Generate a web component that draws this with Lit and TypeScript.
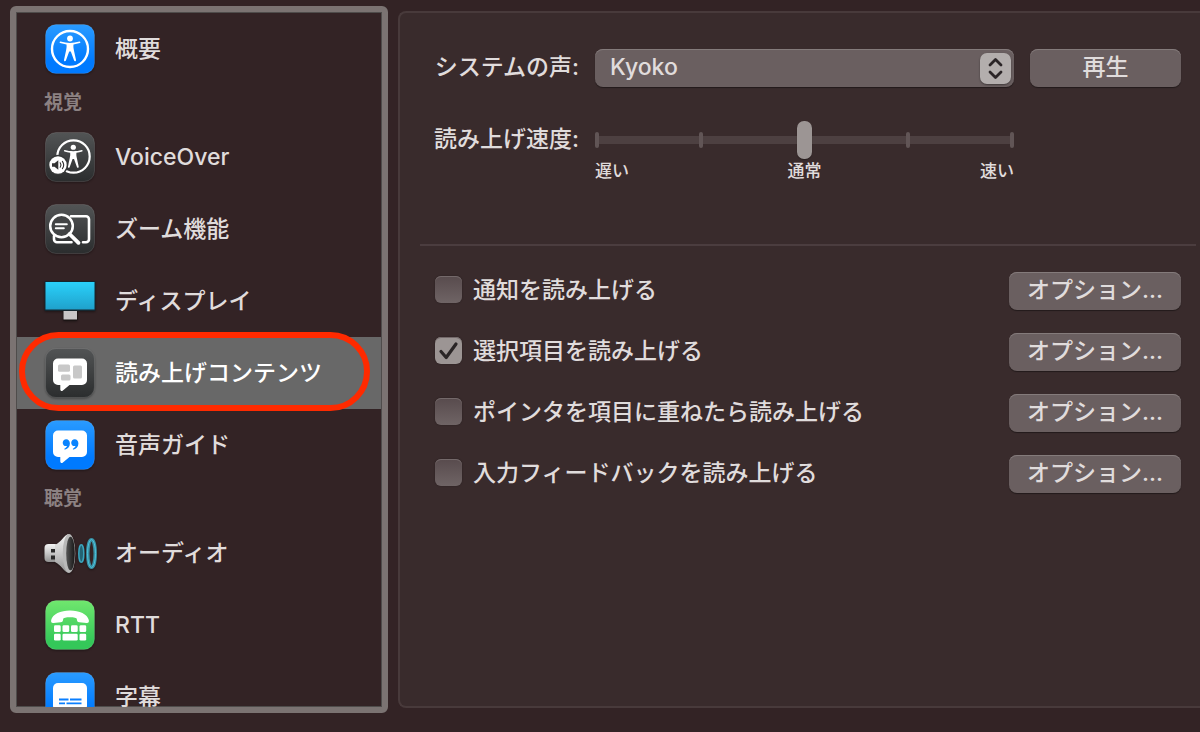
import { LitElement, html, css, svg } from "lit";
import { customElement, property, state } from "lit/decorators.js";
import { classMap } from "lit/directives/class-map.js";

const person = svg`
  <circle cx="25" cy="14.500" r="2.900" fill="#fff"/>
  <path d="M15.600 17.600c3.200.9 6 1.300 9.400 1.300s6.200-.4 9.400-1.300c1-.2 1.400 1.200.5 1.500-2.200.7-4.200 1.100-6.400 1.400-.3 1.800 0 4 .5 6.200l2 9.400c.1 1.400-1.400 1.700-1.900.5l-3.300-9.100h-1.600l-3.300 9.100c-.5 1.200-2 .9-1.900-.5l2-9.400c.5-2.200.8-4.400.5-6.200-2.200-.3-4.200-.7-6.400-1.400-.9-.3-.5-1.700.5-1.500z" fill="#fff"/>`;

const tile = (fill: string) => svg`
  <rect x="0.500" y="0.500" width="49" height="49" rx="10.500" fill="url(#${fill})" stroke="#fff" stroke-opacity="0.120"/>`;

const defs = svg`
  <defs>
    <linearGradient id="blue" x2="0" y2="1"><stop stop-color="#2a9bff"/><stop offset="0.750" stop-color="#007aff"/></linearGradient>
    <linearGradient id="dark" x2="0" y2="1"><stop stop-color="#525455"/><stop offset="1" stop-color="#2b2d2e"/></linearGradient>
    <linearGradient id="green" x2="0" y2="1"><stop stop-color="#70e76e"/><stop offset="0.850" stop-color="#34c759"/></linearGradient>
    <linearGradient id="screen" x2="0" y2="1"><stop stop-color="#2ad1fb"/><stop offset="1" stop-color="#1fa1cb"/></linearGradient>
    <linearGradient id="metal" x2="0" y2="1"><stop stop-color="#f4f4f4"/><stop offset="0.500" stop-color="#c9c9c9"/><stop offset="1" stop-color="#919191"/></linearGradient>
    <linearGradient id="cone" x2="1" y2="0"><stop stop-color="#555"/><stop offset="1" stop-color="#171717"/></linearGradient>
  </defs>`;

const bubble = svg`<path d="M13 10.500h24a5 5 0 0 1 5 5V32a5 5 0 0 1-5 5H24.500l-6.600 5.600c-1.200 1-2.600.4-2.600-1V37H13a5 5 0 0 1-5-5V15.500a5 5 0 0 1 5-5z" fill="#fff"/>`;

const quote = svg`<path d="M21.200 19.200c2.200 0 3.700 1.800 3.700 4.200 0 3.200-2.200 5.500-4.700 6.100-.8.2-1.200-.7-.5-1.100 1.200-.6 2-1.400 2.300-2.400-.3.100-.6.100-1 .1-1.900 0-3.300-1.500-3.300-3.400s1.500-3.500 3.500-3.500z" fill="#0a84ff"/>`;

const icons: Record<string, unknown> = {
  overview: svg`${tile("blue")}<circle cx="25" cy="25" r="18" fill="none" stroke="#fff" stroke-width="2.400"/>${person}`,
  voiceover: svg`${tile("dark")}
    <circle cx="28.500" cy="24.500" r="16.200" fill="none" stroke="#fff" stroke-width="2.200"/>
    <g transform="translate(5.800 2.200) scale(.9)">${person}</g>
    <circle cx="13" cy="33" r="10.200" fill="#373939"/><circle cx="13" cy="33" r="8.700" fill="#fff"/>
    <path d="M7 31.200h2.500l3.800-3v9.600l-3.800-3H7z" fill="#333"/>
    <path d="M15.200 30.800q1.600 2.200 0 4.400M17.400 29.400q2.600 3.600 0 7.200" fill="none" stroke="#333" stroke-width="1.100" stroke-linecap="round"/>`,
  zoom: svg`${tile("dark")}
    <path d="M26 12.300h15a3 3 0 0 1 3 3v20a3 3 0 0 1-3 3h-3M9 32v3.300a3 3 0 0 0 3 3h14.500" fill="none" stroke="#fff" stroke-width="2.600" stroke-linecap="round"/>
    <circle cx="16.500" cy="22" r="11.300" fill="#424445" stroke="#fff" stroke-width="2.500"/>
    <path d="M24.500 30l9 8.800" stroke="#fff" stroke-width="3.800" stroke-linecap="round"/>
    <path d="M10.800 20.200h11M10.800 24.300h8" stroke="#fff" stroke-width="2" stroke-linecap="round"/>`,
  display: svg`
    <rect x="-0.500" y="5" width="51" height="30" rx="1" fill="#142730"/>
    <rect x="0.500" y="6" width="49" height="27.500" fill="url(#screen)"/>
    <rect x="18" y="35" width="14.500" height="9.500" rx="1" fill="#141011"/>
    <rect x="18.500" y="35" width="13.500" height="8.500" fill="#c9c6c7"/>`,
  spoken: svg`${tile("dark")}${bubble}
    <g fill="#c8c8c8"><rect x="13" y="16.500" width="12" height="7.300" rx="1.500"/><rect x="28" y="17.500" width="9" height="13" rx="1.500"/><rect x="16" y="26.500" width="9.500" height="6" rx="1.500"/></g>`,
  guide: svg`${tile("blue")}${bubble}${quote}<g transform="translate(8.500 0)">${quote}</g>`,
  audio: svg`
    <rect x="-0.500" y="16" width="14" height="18" rx="4" fill="url(#metal)"/>
    <path d="M6 21h5v3.500H6zM6 27.500h5v4H6z" fill="#292929"/>
    <path d="M10 17c6-2.500 9-10 13.500-11v39C19 44 16 36.500 10 34z" fill="url(#metal)"/>
    <ellipse cx="24" cy="25.500" rx="6.300" ry="19.500" fill="#b9b9b9"/>
    <ellipse cx="25.500" cy="25.500" rx="4.300" ry="16.800" fill="url(#cone)"/>
    <ellipse cx="36.300" cy="25.500" rx="2.500" ry="8.800" fill="#236373" stroke="#3ba5bd" stroke-width="1.500"/>
    <ellipse cx="46.500" cy="25.500" rx="3.700" ry="13.800" fill="#332325" stroke="#3a8fa3" stroke-width="3.400"/>
    <ellipse cx="46.500" cy="25.500" rx="4" ry="14" fill="none" stroke="#4cc3dd" stroke-width="1"/>`,
  rtt: svg`${tile("green")}
    <path d="M25 10.500c9.500 0 17.500 3.600 18.800 9.500.4 2.200-.3 3.200-2.300 3l-7.200-.8c-1.800-.2-2.300-1.200-2.400-2.800-.1-1.600-3-2.100-6.900-2.100s-6.800.5-6.900 2.100c-.1 1.600-.6 2.600-2.400 2.800l-7.200.8c-2 .2-2.700-.8-2.300-3 1.300-5.900 9.300-9.500 18.800-9.500z" fill="#fff"/>
    <g fill="#fff">
      <rect x="9" y="25.300" width="6.700" height="6.700" rx="1.300"/><rect x="17.500" y="25.300" width="6.700" height="6.700" rx="1.300"/><rect x="26" y="25.300" width="6.700" height="6.700" rx="1.300"/><rect x="34.500" y="25.300" width="6.700" height="6.700" rx="1.300"/>
      <rect x="9" y="33.800" width="6.700" height="6.700" rx="1.300"/><rect x="17.500" y="33.800" width="15.200" height="6.700" rx="1.300"/><rect x="34.500" y="33.800" width="6.700" height="6.700" rx="1.300"/>
    </g>`,
  captions: svg`${tile("blue")}<rect x="8" y="11" width="34" height="28" rx="5" fill="#fff"/>
    <path d="M14 27.500h9.500M25 27.500h11.500M14 31.300h6M21.500 31.300h15" stroke="#0a7fff" stroke-width="1.800"/>`,
};

@customElement("pane-icon")
class PaneIcon extends LitElement {
  @property() name = "overview";
  static styles = css`
    :host { display: block; flex: none; filter: drop-shadow(0 1px 1px #0006); }
    svg { display: block; width: 50px; height: 50px; overflow: visible; }
  `;
  render() {
    return html`<svg viewBox="0 0 50 50" aria-hidden="true">${defs}${icons[this.name]}</svg>`;
  }
}

interface Entry { icon: string; label: string }
interface Section { title?: string; entries: Entry[] }

const sections: Section[] = [
  { entries: [{ icon: "overview", label: "概要" }] },
  {
    title: "視覚",
    entries: [
      { icon: "voiceover", label: "VoiceOver" },
      { icon: "zoom", label: "ズーム機能" },
      { icon: "display", label: "ディスプレイ" },
      { icon: "spoken", label: "読み上げコンテンツ" },
      { icon: "guide", label: "音声ガイド" },
    ],
  },
  {
    title: "聴覚",
    entries: [
      { icon: "audio", label: "オーディオ" },
      { icon: "rtt", label: "RTT" },
      { icon: "captions", label: "字幕" },
    ],
  },
];

@customElement("app-root")
class AppRoot extends LitElement {
  @state() private selected = "spoken";
  @state() private options = [
    { label: "通知を読み上げる", on: false },
    { label: "選択項目を読み上げる", on: true },
    { label: "ポインタを項目に重ねたら読み上げる", on: false },
    { label: "入力フィードバックを読み上げる", on: false },
  ];

  static styles = css`
    :host {
      display: flex;
      gap: 10px;
      height: 100vh;
      box-sizing: border-box;
      padding: 6px 0 19px 10px;
      overflow: hidden;
      background: #332325;
      color: #e0dcdc;
      font: 500 23px/32px Inter, "Noto Sans CJK JP", sans-serif;
    }
    * { box-sizing: border-box; }
    button, select, input { font: inherit; color: inherit; margin: 0; }

    .sidebar {
      flex: none;
      width: 378px;
      border: 6px solid #7b7372;
      border-radius: 6px;
      overflow: hidden;
      box-shadow: inset 0 0 0 1px #4f4c4b;
      padding: 1px;
    }
    .section { margin: 0; padding: 0; list-style: none; }
    .title {
      margin: 0;
      padding: 0 27px;
      font-size: 19px;
      line-height: 36px;
      font-weight: 700;
      color: #8c8182;
    }
    .entry {
      position: relative;
      display: flex;
      align-items: center;
      gap: 20px;
      width: 100%;
      height: 72px;
      padding: 0 28px;
      border: 0;
      background: none;
      text-align: left;
    }
    .entry.current { background: #686868; color: #fff; }
    .marker {
      position: absolute;
      inset: -5px 11px -2px 2px;
      border: 6px solid #ff2a00;
      border-radius: 40px;
      pointer-events: none;
      z-index: 1;
    }

    .panel {
      flex: 1;
      min-width: 0;
      margin: 5px 0;
      border: 2px solid #483a3b;
      border-right: 0;
      border-radius: 8px 0 0 8px;
      background: #392b2c;
      padding: 36px 4px 0 20px;
    }
    .voice {
      display: grid;
      grid-template-columns: auto 1fr 151px;
      column-gap: 16px;
      row-gap: 34px;
      padding: 0 15px 61px 14px;
      border-bottom: 2px solid #4b3d3f;
    }
    .name { text-align: right; line-height: 36px; }
    .button, .picker select {
      height: 38px;
      border: 0;
      border-radius: 8px;
      background: #6a5f60;
      box-shadow: inset 0 1px #847b7b, 0 1px 1px #0006;
      line-height: 36px;
      padding: 0 0 2px;
    }
    .picker { position: relative; display: block; }
    .picker select { width: 100%; padding: 0 48px 2px 15px; appearance: none; }
    .stepper {
      position: absolute;
      top: 4px;
      right: 3px;
      width: 31px;
      height: 31px;
      border-radius: 7px;
      background: #b3aead;
      box-shadow: 0 1px 2px #0006;
      pointer-events: none;
    }
    .track { position: relative; height: 38px; display: flex; align-items: center; justify-content: space-between; }
    .track::before { content: ""; position: absolute; inset: 15px 0; background: #4d4041; }
    .tick { position: relative; width: 4px; height: 16px; border-radius: 2px; background: #615556; }
    .speed {
      position: absolute;
      inset: 0;
      width: 100%;
      height: 38px;
      appearance: none;
      background: none;
    }
    .speed::-webkit-slider-thumb {
      appearance: none;
      width: 15px;
      height: 38px;
      border-radius: 7px;
      background: #9c9594;
      box-shadow: 0 1px 1px #0005;
    }
    .scale { display: flex; justify-content: space-between; font-size: 17px; line-height: 24px; }

    .options {
      margin: 0;
      padding: 26px 15px;
      list-style: none;
      display: grid;
      row-gap: 23px;
    }
    .option { display: flex; align-items: center; justify-content: space-between; height: 38px; }
    .choice { display: flex; align-items: center; gap: 11px; padding-bottom: 2px; }
    .box { position: relative; display: grid; margin-top: -1px; }
    .box input {
      appearance: none;
      width: 27px;
      height: 27px;
      border-radius: 6px;
      background: linear-gradient(#584b4d, #6f6465);
      box-shadow: inset 0 1px #74696a, 0 0 2px #0005;
    }
    .box input:checked { background: #9c9594; }
    .box svg { position: absolute; inset: 0; pointer-events: none; }
    .more { width: 172px; }
  `;

  private toggle(index: number) {
    this.options = this.options.map((o, i) => (i === index ? { ...o, on: !o.on } : o));
  }

  private entry(e: Entry) {
    const current = e.icon === this.selected;
    return html`<li>
      <button class=${classMap({ entry: true, current })} @click=${() => (this.selected = e.icon)}>
        <pane-icon name=${e.icon}></pane-icon>
        <span>${e.label}</span>
        ${current ? html`<span class="marker"></span>` : ""}
      </button>
    </li>`;
  }

  render() {
    return html`
      <nav class="sidebar">
        ${sections.map((s) => html`
          ${s.title ? html`<h2 class="title">${s.title}</h2>` : ""}
          <ul class="section">${s.entries.map((e) => this.entry(e))}</ul>
        `)}
      </nav>
      <main class="panel">
        <div class="voice">
          <label class="name" for="voice">システムの声:</label>
          <span class="picker">
            <select id="voice"><option>Kyoko</option></select>
            <svg class="stepper" viewBox="0 0 31 31" aria-hidden="true">
              <path d="M10 12l5.500-5.500L21 12M10 19l5.500 5.500L21 19" fill="none" stroke="#2b2527" stroke-width="2.800" stroke-linecap="round" stroke-linejoin="round"/>
            </svg>
          </span>
          <button class="button">再生</button>
          <label class="name" for="speed">読み上げ速度:</label>
          <div>
            <div class="track">
              ${[0, 1, 2, 3, 4].map(() => html`<span class="tick"></span>`)}
              <input class="speed" id="speed" type="range" min="0" max="100" value="50">
            </div>
            <div class="scale"><span>遅い</span><span>通常</span><span>速い</span></div>
          </div>
        </div>
        <ul class="options">
          ${this.options.map((o, i) => html`
            <li class="option">
              <label class="choice">
                <span class="box">
                  <input type="checkbox" .checked=${o.on} @change=${() => this.toggle(i)}>
                  ${o.on ? html`<svg viewBox="0 0 27 27" aria-hidden="true"><path d="M6 14.500l5.200 6L21 7" fill="none" stroke="#2a2526" stroke-width="3.200" stroke-linecap="round" stroke-linejoin="round"/></svg>` : ""}
                </span>
                ${o.label}
              </label>
              <button class="button more">オプション...</button>
            </li>
          `)}
        </ul>
      </main>
    `;
  }
}
